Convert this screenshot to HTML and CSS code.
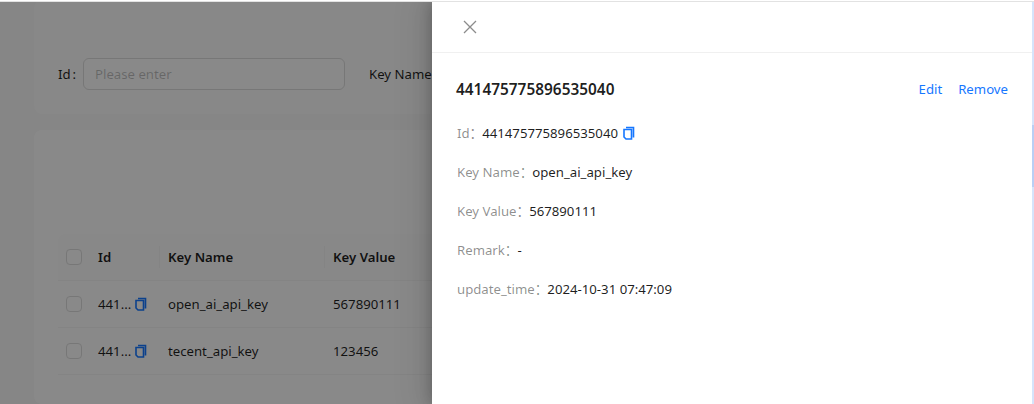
FILE: index.html
```html
<!DOCTYPE html>
<html lang="en">
<head>
<meta charset="utf-8">
<title>Keys</title>
<link rel="stylesheet" href="styles.css">
</head>
<body>
<div class="page">
  <span class="collapse"></span>
  <section class="card search">
    <div class="field"><label class="field-label">Id<span class="colon">:</span></label><div class="input">Please enter</div></div>
    <div class="field"><label class="field-label">Key Name<span class="colon">:</span></label><div class="input"></div></div>
  </section>
  <section class="card list">
    <div class="table">
      <div class="row head">
        <span class="cell c-check"><i class="box"></i></span>
        <span class="cell c-id">Id</span>
        <span class="cell c-name">Key Name</span>
        <span class="cell c-value">Key Value</span>
      </div>
      <div class="row">
        <span class="cell c-check"><i class="box"></i></span>
        <span class="cell c-id">441...<svg class="copy" viewBox="0 0 12 14"><path d="M3 1.5h7.5v10M1 3.5h7.5v9.5H3L1 11z" fill="none" stroke="#1677ff" stroke-width="1.6"/></svg></span>
        <span class="cell c-name">open_ai_api_key</span>
        <span class="cell c-value">567890111</span>
      </div>
      <div class="row">
        <span class="cell c-check"><i class="box"></i></span>
        <span class="cell c-id">441...<svg class="copy" viewBox="0 0 12 14"><path d="M3 1.5h7.5v10M1 3.5h7.5v9.5H3L1 11z" fill="none" stroke="#1677ff" stroke-width="1.6"/></svg></span>
        <span class="cell c-name">tecent_api_key</span>
        <span class="cell c-value">123456</span>
      </div>
    </div>
  </section>
</div>
<div class="mask"></div>
<aside class="drawer">
  <header class="drawer-head">
    <svg class="close" viewBox="0 0 14 14"><path d="M1 1l12 12M13 1L1 13" fill="none" stroke="#8c8c8c" stroke-width="1.3"/></svg>
  </header>
  <div class="drawer-body">
    <div class="title-row">
      <h2 class="title">441475775896535040</h2>
      <div class="actions"><a class="link">Edit</a><a class="link">Remove</a></div>
    </div>
    <dl class="desc">
      <div class="item"><dt class="desc-label">Id：</dt><dd class="desc-value">441475775896535040<svg class="copy" viewBox="0 0 12 14"><path d="M3 1.5h7.5v10M1 3.5h7.5v9.5H3L1 11z" fill="none" stroke="#1677ff" stroke-width="1.6"/></svg></dd></div>
      <div class="item"><dt class="desc-label">Key Name：</dt><dd class="desc-value">open_ai_api_key</dd></div>
      <div class="item"><dt class="desc-label">Key Value：</dt><dd class="desc-value">567890111</dd></div>
      <div class="item"><dt class="desc-label">Remark：</dt><dd class="desc-value">-</dd></div>
      <div class="item"><dt class="desc-label">update_time：</dt><dd class="desc-value">2024-10-31 07:47:09</dd></div>
    </dl>
  </div>
</aside>
<div class="topline"></div>
<div class="edge"><span class="edge-thumb"></span></div>
</body>
</html>
```
FILE: styles.css
```css
* { box-sizing: border-box; }
html, body { margin: 0; height: 100%; overflow: hidden; }
body {
  position: relative;
  width: 1034px;
  height: 404px;
  background: #f4f4f4;
  font-family: "Noto Sans", "Noto Sans CJK SC", sans-serif;
  font-size: 13.2px;
  line-height: 22px;
  color: rgba(0, 0, 0, 0.88);
}
.page { padding: 0 0 0 34px; position: relative; height: 404px; }
.collapse {
  position: absolute; left: -14px; top: 22px;
  width: 21px; height: 21px; border-radius: 50%;
  background: #fff; opacity: .15;
}
.card { background: #f7f7f7; border-radius: 8px; width: 1000px; }
.search { height: 114px; display: flex; padding: 58px 24px 0; gap: 24px; }
.field { display: flex; height: 32px; align-items: center; width: 287px; flex: none; }
.field-label { width: 25px; flex: none; white-space: nowrap; }
.colon { margin-left: 2px; }
.field + .field .field-label { width: 80px; }
.input {
  width: 262px; height: 32px; flex: none; padding: 4px 11px;
  border: 1px solid #d9d9d9; border-radius: 6px;
  background: #fafafa; color: rgba(0,0,0,.25);
}
.list { margin-top: 16px; height: 274px; padding: 104px 24px 0; background: #fafafa; }
.table { display: flex; flex-direction: column; }
.row { display: flex; align-items: center; height: 47px; border-bottom: 1px solid #f0f0f0; }
.head { background: #f7f7f7; border-radius: 8px 8px 0 0; font-weight: 600; }
.cell { padding-left: 8px; display: flex; align-items: center; }
.c-check { width: 32px; padding-left: 8px; flex: none; }
.c-id { width: 69px; flex: none; }
.c-name { width: 165px; flex: none; padding-left: 9px; }
.c-value { width: 160px; flex: none; padding-left: 9px; }
.head .c-name, .head .c-value { border-left: 1px solid #f0f0f0; height: 22px; padding-left: 8px; }
.box { display: block; width: 16px; height: 16px; border: 1px solid #d9d9d9; border-radius: 4px; background: #fafafa; }
.copy { width: 12px; height: 14px; margin-left: 4px; flex: none; }
.desc-value .copy { margin-left: 5px; }
.mask { position: absolute; left: 0; right: 0; top: 2px; bottom: 0; background: rgba(0,0,0,.45); }
.drawer {
  position: absolute; left: 432px; top: 2px; width: 600px; height: 402px;
  background: #fff;
  box-shadow: -2px 0 10px rgba(0,0,0,.14), -6px 0 16px rgba(0,0,0,.08), -9px 0 28px 8px rgba(0,0,0,.05);
}
.drawer-head { height: 51px; border-bottom: 1px solid #f0f0f0; padding: 18px 0 0 31px; }
.close { display: block; width: 14px; height: 14px; }
.drawer-body { padding: 24px 24px 0; }
.title-row { display: flex; justify-content: space-between; align-items: center; height: 24px; }
.title { margin: 0; padding-top: 2px; font-size: 15.4px; line-height: 22px; font-weight: 600; }
.actions { display: flex; gap: 16px; }
.link { color: #1677ff; }
.desc { margin: 21px 0 0; padding-left: 1px; display: flex; flex-direction: column; gap: 17px; }
.item { display: flex; height: 22px; align-items: center; }
.desc-label { color: rgba(0,0,0,.45); }
.desc-value { margin: 0 0 0 -0.6px; display: flex; align-items: center; color: rgba(0,0,0,.88); }
.topline { position: absolute; left: 0; right: 0; top: 0; height: 2px; background: #fff; border-bottom: 1px solid #e2e2e2; }
.edge { position: absolute; right: 0; top: 2px; bottom: 0; width: 2px; background: #d6e4fb; }
.edge-thumb { position: absolute; left: 0; right: 0; top: 123px; height: 62px; background: #b9cff5; }
```
